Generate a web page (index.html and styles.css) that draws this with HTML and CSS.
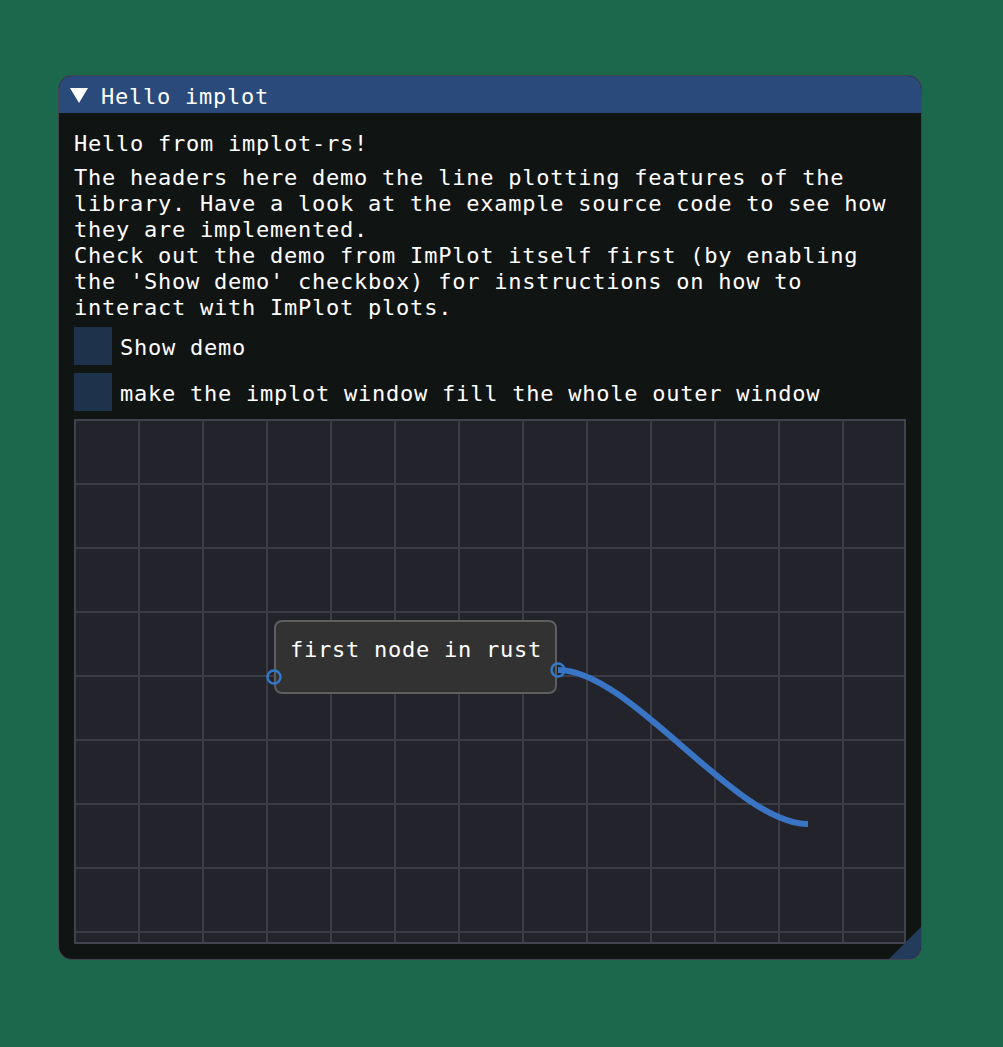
FILE: index.html
```html
<!DOCTYPE html>
<html>
<head>
<meta charset="utf-8">
<link rel="stylesheet" href="styles.css">
</head>
<body>
<div class="page">
  <div class="window">
    <div class="titlebar">
      <svg class="arrow" width="18" height="16" viewBox="0 0 18 16"><polygon points="0,1 18,1 9,16" fill="#ffffff"/></svg>
      <span class="title text">Hello implot</span>
    </div>
    <div class="content">
      <p class="text">Hello from implot-rs!</p>
      <p class="text">The headers here demo the line plotting features of the<br>library. Have a look at the example source code to see how<br>they are implemented.<br>Check out the demo from ImPlot itself first (by enabling<br>the 'Show demo' checkbox) for instructions on how to<br>interact with ImPlot plots.</p>
      <label class="check"><span class="box"></span><span class="text">Show demo</span></label>
      <label class="check"><span class="box"></span><span class="text">make the implot window fill the whole outer window</span></label>
      <div class="canvas">
        <div class="node"><span class="text">first node in rust</span></div>
        <svg class="links" width="828" height="522" viewBox="0 0 828 522">
          <path d="M482 249 C555 249 659 403 732 403" fill="none" stroke="#3a74c4" stroke-width="6"/>
          <circle cx="198" cy="256" r="6.5" fill="none" stroke="#3178c8" stroke-width="2.5"/>
          <circle cx="482" cy="249" r="6.5" fill="none" stroke="#3178c8" stroke-width="2.5"/>
        </svg>
      </div>
    </div>
    <div class="grip"></div>
  </div>
</div>
</body>
</html>
```
FILE: styles.css
```css
html, body {
  margin: 0;
  padding: 0;
  background: #1c684c;
}
.page {
  padding: 75px 0 0 58px;
  height: 1047px;
  box-sizing: border-box;
}
.window {
  position: relative;
  width: 864px;
  height: 885px;
  box-sizing: border-box;
  border: 1px solid rgba(110, 110, 128, 0.55);
  border-radius: 14px;
  background: rgb(16, 21, 19);
  overflow: hidden;
  display: flex;
  flex-direction: column;
  font-family: "DejaVu Sans Mono", "Liberation Mono", monospace;
  font-size: 22px;
  letter-spacing: 0.76px;
  line-height: 26px;
  color: #ffffff;
}
.titlebar {
  height: 37px;
  background: #294a7a;
  display: flex;
  align-items: center;
  padding-left: 11px;
  gap: 13px;
}
.arrow {
  display: block;
}
.title {
  display: block;
}
.content {
  flex: 1;
  display: flex;
  flex-direction: column;
  gap: 8px;
  padding: 16px 15px 15px 15px;
}
.text {
  margin: 0 0 -2px 0;
  padding-top: 2px;
  white-space: nowrap;
}
.check {
  display: flex;
  align-items: center;
  gap: 8px;
  height: 38px;
}
.box {
  width: 38px;
  height: 38px;
  background: rgb(30, 50, 75);
}
.canvas {
  position: relative;
  flex: 1;
  border: 2px solid rgb(66, 66, 78);
  background-color: rgb(35, 36, 43);
  background-image:
    linear-gradient(to right, rgb(60, 60, 68) 2px, transparent 2px),
    linear-gradient(to bottom, rgb(60, 60, 68) 2px, transparent 2px);
  background-size: 64px 64px;
  background-position: 62px 62px;
  overflow: hidden;
}
.node {
  position: absolute;
  left: 198px;
  top: 199px;
  width: 283px;
  height: 74px;
  box-sizing: border-box;
  padding: 13px 14px 14px 14px;
  border: 2px solid #5e5e5e;
  border-radius: 8px;
  background: #323232;
}
.node .text {
  display: block;
}
.links {
  position: absolute;
  left: 0;
  top: 0;
  overflow: visible;
}
.grip {
  position: absolute;
  right: 0;
  bottom: 0;
  width: 32px;
  height: 32px;
  background: rgb(36, 60, 92);
  clip-path: polygon(100% 0, 100% 100%, 0 100%);
}
```
